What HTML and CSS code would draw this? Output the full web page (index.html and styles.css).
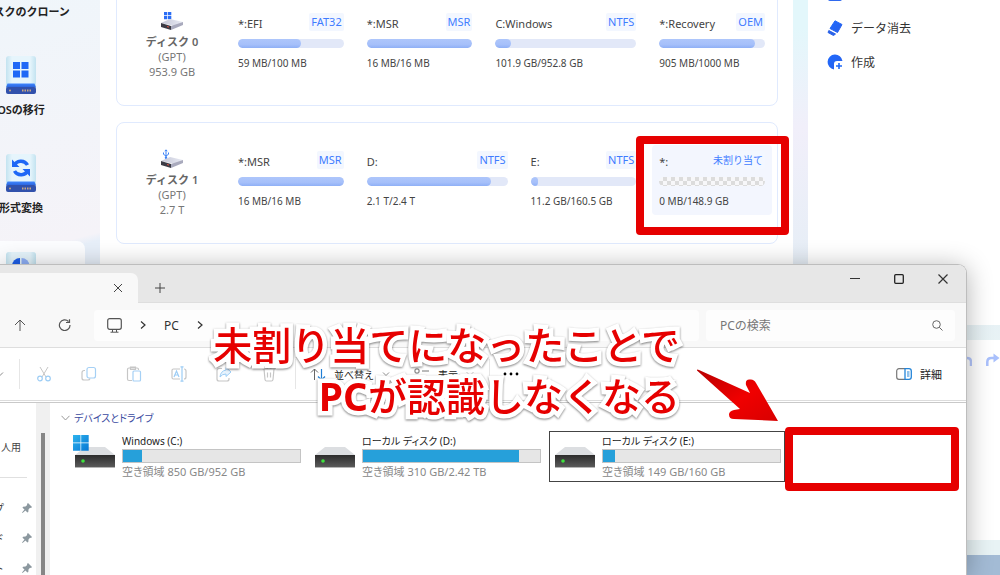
FILE: index.html
```html
<!DOCTYPE html>
<html lang="ja">
<head>
<meta charset="utf-8">
<meta name="viewport" content="width=device-width, initial-scale=1">
<title>ディスク管理</title>
<link rel="stylesheet" href="styles.css">
</head>
<body>
<svg class="defs" width="0" height="0" aria-hidden="true">
  <defs>
    <linearGradient id="g-box" x1="0" x2="1"><stop offset="0" stop-color="#c3e3f0"/><stop offset=".2" stop-color="#e6f5fc"/><stop offset=".8" stop-color="#e6f5fc"/><stop offset="1" stop-color="#c3e3f0"/></linearGradient>
    <linearGradient id="g-base" x1="0" y1="0" x2="0" y2="1"><stop offset="0" stop-color="#3f86ff"/><stop offset="1" stop-color="#2a62da"/></linearGradient>
    <linearGradient id="g-body" x1="0" y1="0" x2="0" y2="1"><stop offset="0" stop-color="#2c2c2c"/><stop offset="1" stop-color="#5a5a5a"/></linearGradient>
    <linearGradient id="g-win" x1="0" y1="0" x2="1" y2="1"><stop offset="0" stop-color="#2db4ee"/><stop offset="1" stop-color="#0877d4"/></linearGradient>
    <linearGradient id="g-blue" x1="0" y1="0" x2="1" y2="1"><stop offset="0" stop-color="#1f6bff"/><stop offset="1" stop-color="#2a5fe8"/></linearGradient>
    <linearGradient id="g-top" x1="0" y1="0" x2="1" y2="0"><stop offset="0" stop-color="#c5c7d6"/><stop offset="1" stop-color="#e8eaf4"/></linearGradient>
    <linearGradient id="g-arrow" x1="0" y1="0" x2="1" y2="1"><stop offset="0" stop-color="#b80000"/><stop offset=".55" stop-color="#f00000"/><stop offset="1" stop-color="#d80000"/></linearGradient>
    <symbol id="case" viewBox="0 0 30 38">
      <rect x="0" y="0" width="30" height="34" rx="3" fill="url(#g-box)"/>
      <path d="M1.500 27.500h27l1.500 4H0z" fill="url(#g-base)"/>
      <rect x="0" y="31" width="30" height="7" rx="2" fill="#3151ac"/>
      <circle cx="4" cy="34.500" r="1" fill="#c9a882"/>
      <path d="M16 34.500h10" stroke="#c9a882" stroke-width="2" stroke-dasharray="1.500 1"/>
    </symbol>
    <symbol id="ssd" viewBox="0 0 22 11">
      <path d="M0 4 9 0l13 3-8 4z" fill="url(#g-top)"/>
      <path d="M0 4l10 3v4L0 8z" fill="#3b3b45"/>
      <path d="M10 7l12-4v3l-12 5z" fill="#a9aabd"/>
      <path d="M6 7.500l2 .6" stroke="#e05040"/>
    </symbol>
    <symbol id="drive" viewBox="0 0 40 21">
      <path d="M0 8 10 0h20l10 8z" fill="#dcdee1"/>
      <rect x="0" y="8" width="40" height="12" fill="url(#g-body)"/>
      <path d="M0 20.500h40" stroke="#b5b5b5"/>
      <circle cx="8" cy="14" r="1.800" fill="#3ee23e"/>
    </symbol>
    <symbol id="pin" viewBox="0 0 10 10">
      <path d="M6 0 10 4 9 5 8 4.800 6.500 6.500 6.300 9 5.300 9.500 3.500 7.500 0.500 10 0 9.500 2.500 6.500.5 4.700 1 3.700 3.500 3.500 5.200 2 5 1z" fill="#8c989f"/>
    </symbol>
    <symbol id="chev-r" viewBox="0 0 6 8"><path d="M1 .5 5 4 1 7.500" fill="none" stroke="#333" stroke-width="1.200"/></symbol>
    <symbol id="chev-d" viewBox="0 0 8 6"><path d="M1 1.500 4 4.500 7 1.500" fill="none" stroke="#8a8a8a"/></symbol>
  </defs>
</svg>

<div class="desktop">
  <div class="app">
    <nav class="side">
      <button class="side-item"><svg class="side-icon" viewBox="0 0 30 38"><use href="#case"/></svg><span>ディスクのクローン</span></button>
      <button class="side-item"><svg class="side-icon" viewBox="0 0 30 38"><use href="#case"/><path d="M7 6h7v7H7zM15.500 6h7v7h-7zM7 14.500h7v7H7zM15.500 14.500h7v7h-7z" fill="#1f68f6"/></svg><span>OSの移行</span></button>
      <button class="side-item"><svg class="side-icon" viewBox="0 0 30 38"><use href="#case"/><path d="M8 12a7.500 7.500 0 0 1 13.500-1M22 16a7.500 7.500 0 0 1-13.500 1" fill="none" stroke="#1f68f6" stroke-width="3.500"/><path d="M6 5.500V13h7.500zM24 22.500V15h-7.500z" fill="#1f68f6"/></svg><span>形式変換</span></button>
      <button class="side-item active" aria-label="パーティション"><svg class="side-icon" viewBox="0 0 30 38"><use href="#case"/><path d="M14 6v16A8 8 0 0 1 14 6z" fill="#1f5fe8"/><path d="M15.500 6a8 8 0 0 1 0 16z" fill="#8fb0f8"/></svg></button>
    </nav>

    <main class="disks">
      <section class="card">
        <div class="disk">
          <svg class="disk-icon" viewBox="0 0 22 20"><path d="M3 1h3.300v3.300H3zM7 1h3.300v3.300H7zM3 5h3.300v3.300H3zM7 5h3.300v3.300H7z" fill="#2a6df5"/><use href="#ssd" x="0" y="8" width="22" height="11"/></svg>
          <b>ディスク 0</b><span>(GPT)</span><span>953.9 GB</span>
        </div>
        <div class="part">
          <div class="part-head"><span>*:EFI</span><em class="tag">FAT32</em></div>
          <div class="bar"><i style="width:60%"></i></div><p>59 MB/100 MB</p>
        </div>
        <div class="part">
          <div class="part-head"><span>*:MSR</span><em class="tag">MSR</em></div>
          <div class="bar"><i style="width:100%"></i></div><p>16 MB/16 MB</p>
        </div>
        <div class="part wide">
          <div class="part-head"><span>C:Windows</span><em class="tag">NTFS</em></div>
          <div class="bar"><i style="width:11%"></i></div><p>101.9 GB/952.8 GB</p>
        </div>
        <div class="part">
          <div class="part-head"><span>*:Recovery</span><em class="tag">OEM</em></div>
          <div class="bar"><i style="width:91%"></i></div><p>905 MB/1000 MB</p>
        </div>
      </section>

      <section class="card">
        <div class="disk">
          <svg class="disk-icon" viewBox="0 0 22 20"><path d="M5 9V1M3.800 2.200 5 .8l1.200 1.400M2.500 3.500v1.800L5 7l2.500-1.700V3.500" fill="none" stroke="#3b82f6"/><circle cx="5" cy="8.800" r="1.200" fill="#3b82f6"/><use href="#ssd" x="0" y="8" width="22" height="11"/></svg>
          <b>ディスク 1</b><span>(GPT)</span><span>2.7 T</span>
        </div>
        <div class="part">
          <div class="part-head"><span>*:MSR</span><em class="tag">MSR</em></div>
          <div class="bar"><i style="width:100%"></i></div><p>16 MB/16 MB</p>
        </div>
        <div class="part wide">
          <div class="part-head"><span>D:</span><em class="tag">NTFS</em></div>
          <div class="bar"><i style="width:88%"></i></div><p>2.1 T/2.4 T</p>
        </div>
        <div class="part">
          <div class="part-head"><span>E:</span><em class="tag">NTFS</em></div>
          <div class="bar"><i style="width:7%"></i></div><p>11.2 GB/160.5 GB</p>
        </div>
        <div class="part selected">
          <div class="part-head"><span>*:</span><em class="tag free">未割り当て</em></div>
          <div class="bar empty"></div><p>0 MB/148.9 GB</p>
        </div>
      </section>
    </main>

    <aside class="actions">
      <div class="menu">
        <button class="menu-item" aria-label="操作"><svg viewBox="0 0 16 16"><rect x="1" y="2" width="14" height="13" rx="2" fill="#2f69ee"/></svg></button>
        <button class="menu-item"><svg viewBox="0 0 16 16"><path d="M8 .8 15 4.500 10.500 12.500 3 8.500z" fill="url(#g-blue)" stroke="url(#g-blue)" stroke-linejoin="round"/><path d="M1.800 10.500 8.500 14 6.500 15.500 1 12.500z" fill="#2a62e8" stroke="#2a62e8" stroke-linejoin="round"/></svg>データ消去</button>
        <button class="menu-item"><svg viewBox="0 0 16 16"><path d="M15.500 7A7.500 7.500 0 1 0 7 15.500V10a3 3 0 0 1 3-3z" fill="url(#g-blue)"/><path d="M12 9v6M9 12h6" stroke="#1f68f6" stroke-width="1.600"/></svg>作成</button>
      </div>
      <div class="queue">
        <button aria-label="元に戻す"><svg viewBox="0 0 14 14"><path d="M13 13V9q0-4-4-4H2M5 1 1 5l4 4" fill="none" stroke="#b4c6fb" stroke-width="2.500"/></svg></button>
        <button aria-label="やり直し"><svg viewBox="0 0 14 14"><path d="M1.300 13V9q0-4 4-4H8" fill="none" stroke="#a9c0fc" stroke-width="2.500"/><path d="M7.500 0.500 13.500 5 7.500 9.500z" fill="#a9c0fc"/></svg></button>
      </div>
    </aside>
  </div>

  <div class="window">
    <header class="titlebar">
      <div class="tab"><button aria-label="タブを閉じる"><svg width="10" height="10" viewBox="0 0 10 10"><path d="M1 1l8 8M9 1 1 9" stroke="#444"/></svg></button></div>
      <button class="new-tab" aria-label="新しいタブ"><svg width="10" height="10" viewBox="0 0 10 10"><path d="M5 0v10M0 5h10" stroke="#444"/></svg></button>
      <div class="win-btns">
        <button aria-label="最小化"><svg width="10" height="10" viewBox="0 0 10 10"><path d="M0 4.500h10" stroke="#333"/></svg></button>
        <button aria-label="最大化"><svg width="10" height="10" viewBox="0 0 10 10"><rect x=".7" y=".7" width="8.600" height="8.600" rx="1" fill="none" stroke="#222" stroke-width="1.300"/></svg></button>
        <button aria-label="閉じる"><svg width="10" height="10" viewBox="0 0 10 10"><path d="M.5.5l9 9M9.500.5l-9 9" stroke="#333" stroke-width="1.200"/></svg></button>
      </div>
    </header>

    <div class="nav-row">
      <button class="nav-btn" aria-label="上へ"><svg width="12" height="12" viewBox="0 0 12 12"><path d="M6 12V1M1 6l5-5 5 5" fill="none" stroke="#555"/></svg></button>
      <button class="nav-btn" aria-label="更新"><svg width="13" height="12" viewBox="0 0 13 12"><path d="M10.500 2.500A5.300 5.300 0 1 0 12 6M11.500.3v3.200H8" fill="none" stroke="#555" stroke-width="1.200"/></svg></button>
      <div class="address">
        <svg width="15" height="15" viewBox="0 0 15 15"><rect x=".7" y=".7" width="13.600" height="10.600" rx="2" fill="none" stroke="#555" stroke-width="1.200"/><path d="M5.500 11.500v2.500M9.500 11.500v2.500M3.500 14.200h8" stroke="#555"/></svg>
        <svg width="6" height="8"><use href="#chev-r"/></svg>
        <span>PC</span>
        <svg width="6" height="8"><use href="#chev-r"/></svg>
      </div>
      <label class="search"><input type="text" placeholder="PCの検索" aria-label="PCの検索"><svg width="11" height="11" viewBox="0 0 11 11"><circle cx="4.500" cy="4.500" r="3.800" fill="none" stroke="#666"/><path d="M7.300 7.300 10.500 10.500" stroke="#666"/></svg></label>
    </div>

    <div class="toolbar">
      <button class="edge" aria-label="新規作成"><svg width="8" height="6"><use href="#chev-d"/></svg></button>
      <span class="sep"></span>
      <button class="tool" aria-label="切り取り"><svg viewBox="0 0 16 16" fill="none"><path d="M4 1l6 10M12 1 6 11" stroke="#c6c6c6"/><circle cx="4" cy="12.500" r="2.300" stroke="#9dcdf5" stroke-width="1.200"/><circle cx="12" cy="12.500" r="2.300" stroke="#9dcdf5" stroke-width="1.200"/></svg></button>
      <button class="tool" aria-label="コピー"><svg viewBox="0 0 16 16" fill="none"><path d="M4 4.500H3a2 2 0 0 0-2 2V12a2 2 0 0 0 2 2h4a2 2 0 0 0 2-1.500" stroke="#c6c6c6" stroke-width="1.200"/><rect x="6" y="1.500" width="8.500" height="10.500" rx="2" stroke="#a5d0f5" stroke-width="1.200"/></svg></button>
      <button class="tool" aria-label="貼り付け"><svg viewBox="0 0 16 16" fill="none"><path d="M6 14.500H3a1.500 1.500 0 0 1-1.500-1.500V3.500A1.500 1.500 0 0 1 3 2h8a1.500 1.500 0 0 1 1.500 1.500V4M4.500 3.500v-2.500h5v2.500z" stroke="#c6c6c6" stroke-width="1.200"/><rect x="7" y="5" width="7.500" height="10" rx="1" stroke="#a5d0f5" stroke-width="1.200"/></svg></button>
      <button class="tool" aria-label="名前の変更"><svg viewBox="0 0 16 16" fill="none"><path d="M9 3H2.500A1.500 1.500 0 0 0 1 4.500v7A1.500 1.500 0 0 0 2.500 13H9M13 3a2 2 0 0 1 2 2v6a2 2 0 0 1-2 2" stroke="#c6c6c6" stroke-width="1.200"/><path d="M11 1v14M9.500.8h3M9.500 15.200h3M3 11l2.500-6L8 11M4 9h3" stroke="#9dcdf5" stroke-width="1.200"/></svg></button>
      <button class="tool" aria-label="共有"><svg viewBox="0 0 16 16" fill="none"><path d="M6 2.500H3a2 2 0 0 0-2 2V13a2 2 0 0 0 2 2h8a2 2 0 0 0 2-2v-1" stroke="#c6c6c6" stroke-width="1.200"/><path d="M10 1.500 15 6l-5 4.500V8Q6 8 4 11q.5-6 6-7z" fill="#e7f3fd" stroke="#9dcdf5"/></svg></button>
      <button class="tool" aria-label="削除"><svg viewBox="0 0 16 16" fill="none"><path d="M1.500 3h13M6 3q0-2 2-2t2 2M3 3l1 10.500q.2 1.500 1.500 1.500h5q1.300 0 1.500-1.500L13 3M6.500 6.500v5M9.500 6.500v5" stroke="#c6c6c6" stroke-width="1.200"/></svg></button>
      <span class="sep after-tools"></span>
      <button class="menu-btn sort"><svg width="16" height="13" viewBox="0 0 16 13" fill="none"><path d="M4.500 12V1M1 4.500 4.500 1 8 4.500" stroke="#666"/><path d="M11.500 1v11M8 8.500l3.500 3.500L15 8.500" stroke="#1f7fd6" stroke-width="1.200"/></svg>並べ替え<svg width="8" height="6"><use href="#chev-d"/></svg></button>
      <button class="menu-btn"><svg width="16" height="13" viewBox="0 0 16 13" fill="none"><rect x="1" y="1" width="4" height="4" rx="1" stroke="#666"/><rect x="1" y="8" width="4" height="4" rx="1" stroke="#666"/><path d="M8 3h7M8 10h7" stroke="#777"/></svg>表示<svg width="8" height="6"><use href="#chev-d"/></svg></button>
      <span class="sep"></span>
      <button class="more" aria-label="その他"><svg width="16" height="4" viewBox="0 0 16 4"><circle cx="2" cy="2" r="1.400"/><circle cx="8" cy="2" r="1.400"/><circle cx="14" cy="2" r="1.400"/></svg></button>
      <button class="menu-btn details"><svg width="16" height="12" viewBox="0 0 16 12" fill="none"><path d="M9 .7H3a2.300 2.300 0 0 0-2.300 2.300v6A2.300 2.300 0 0 0 3 11.300h6" stroke="#777" stroke-width="1.200"/><path d="M9 .7h4a2.300 2.300 0 0 1 2.300 2.300v6a2.300 2.300 0 0 1-2.300 2.300H9z" stroke="#2384d8" stroke-width="1.300"/><path d="M11 4h2.500M11 6h2.500M11 8h2.500" stroke="#2384d8"/></svg>詳細</button>
    </div>

    <div class="body">
      <div class="tree">
        <div class="tree-top">人用</div>
        <div class="tree-item"><span>プ</span><svg width="10" height="10"><use href="#pin"/></svg></div>
        <div class="tree-item"><span>ド</span><svg width="10" height="10"><use href="#pin"/></svg></div>
        <div class="tree-item"><span>ト</span><svg width="10" height="10"><use href="#pin"/></svg></div>
      </div>
      <div class="track"><div class="thumb"></div></div>
      <div class="content">
        <button class="group"><svg width="9" height="6" viewBox="0 0 9 6"><path d="M.5.8 4.500 5 8.500.8" fill="none" stroke="#999"/></svg>デバイスとドライブ</button>
        <div class="drives">
          <div class="drive">
            <svg class="drive-icon" viewBox="0 0 42 34"><use href="#drive" x="2" y="13" width="40" height="21"/><path d="M0 1h7.500v7.500H0zM8.200 1h7.500v7.500H8.200zM0 9.200h7.500v7.500H0zM8.200 9.200h7.500v7.500H8.200z" fill="url(#g-win)"/></svg>
            <div class="drive-info"><span>Windows (C:)</span><div class="meter"><i style="width:11%"></i></div><small>空き領域 850 GB/952 GB</small></div>
          </div>
          <div class="drive">
            <svg class="drive-icon" viewBox="0 0 42 34"><use href="#drive" x="2" y="13" width="40" height="21"/></svg>
            <div class="drive-info"><span>ローカル ディスク (D:)</span><div class="meter"><i style="width:88%"></i></div><small>空き領域 310 GB/2.42 TB</small></div>
          </div>
          <div class="drive focus">
            <svg class="drive-icon" viewBox="0 0 42 34"><use href="#drive" x="2" y="13" width="40" height="21"/></svg>
            <div class="drive-info"><span>ローカル ディスク (E:)</span><div class="meter"><i style="width:7%"></i></div><small>空き領域 149 GB/160 GB</small></div>
          </div>
        </div>
      </div>
    </div>
  </div>

  <div class="mark mark-part"></div>
  <div class="mark mark-drive"></div>
  <p class="note">未割り当てになったことで<br><b>PC</b>が認識しなくなる</p>
  <svg class="arrow" viewBox="0 0 84 54"><path d="M1 1.500Q.5 0 3 1L54 24 50 16Q49 10 54 10.500 58 10 60 14L82 52 38 50Q33 50 33 45.500 33 42 38 41L44 40z" fill="url(#g-arrow)"/></svg>
</div>
</body>
</html>
```

FILE: styles.css
```css
* { box-sizing: border-box; }

body {
  margin: 0;
  font-family: "Noto Sans", "Noto Sans CJK JP", sans-serif;
  font-size: 11px;
  color: #444;
}

button {
  display: flex;
  align-items: center;
  padding: 0;
  border: 0;
  background: none;
  font: inherit;
  color: inherit;
}

p { margin: 0; }
svg { flex: none; display: block; }
.defs { position: absolute; }

.desktop {
  position: relative;
  height: 100vh;
  overflow: hidden;
  background: #a3bbd5;
}

/* Partition manager, scrolled partly out of view */
.app {
  display: flex;
  height: calc(100vh + 33px);
  margin: -53px 0 0 -43px;
  background: linear-gradient(#e3f7fb 0, #e3f7fb 80px, #f1effa 180px, #e6eef6 320px, #e8f3f5 400px);
}

.side {
  width: 143px;
  padding-right: 15px;
  background: linear-gradient(165deg, #eef6fb, #f5f3f8 50%, #e7eff9 320px);
}

.side-item {
  flex-direction: column;
  width: 100%;
  height: 98px;
  padding-top: 11px;
  gap: 8px;
  border-radius: 8px;
  color: #222;
  font-weight: 600;
  line-height: 16px;
  white-space: nowrap;
}

.side-item.active { background: #fcfdff; }
.side-icon { width: 30px; height: 38px; }

.disks {
  flex: 1;
  display: flex;
  flex-direction: column;
  gap: 16px;
  padding: 37px 15px 0 16px;
  background: #fff;
}

.card {
  display: flex;
  gap: 9px;
  height: 122px;
  padding: 22px 5px 0 0;
  border: 1px solid #e0eafe;
  border-radius: 8px;
}

.disk {
  display: flex;
  flex-direction: column;
  align-items: center;
  width: 110px;
  margin-right: -5px;
  padding-top: 4px;
  color: #777;
  line-height: 15px;
}

.disk b { color: #666; font-weight: 600; }
.disk-icon { width: 22px; height: 20px; margin-bottom: 3px; }

.part {
  flex: 3 1 0;
  height: 70px;
  padding: 6px 7px 0;
  border-radius: 4px;
}

.part.wide { flex-grow: 4; }
.part.selected { background: #f3f6fe; }

.part-head {
  display: flex;
  justify-content: space-between;
  height: 26px;
  white-space: nowrap;
}

.part-head span { line-height: 22px; }

.tag {
  height: 18px;
  padding: 0 2px;
  border-radius: 2px;
  background: #f3f7ff;
  color: #3f7cff;
  font-size: 11px;
  font-style: normal;
  line-height: 18px;
}

.tag.free { font-size: 10px; }

.bar {
  height: 9px;
  overflow: hidden;
  border-radius: 5px;
  background: #e2e8f8;
}

.bar i {
  display: block;
  height: 100%;
  border-radius: 5px;
  background: linear-gradient(#aec6fb, #a6c0fa 60%, #8fb0f6);
}

.bar.empty { background: repeating-conic-gradient(#dcdcdc 0 25%, #f7f7f9 0 50%) 0 0 / 8px 8px; }

.part p { margin-top: 7px; font-size: 10px; line-height: 16px; white-space: nowrap; }

.actions {
  display: flex;
  flex-direction: column;
  gap: 15px;
  width: 207px;
  padding: 0 0 15px 15px;
}

.menu {
  height: 378px;
  padding: 30px 19px 0;
  background: #fff;
}

.menu-item { gap: 8px; height: 34px; font-size: 12px; color: #333; }
.menu-item svg { width: 16px; height: 16px; }

.queue {
  flex: 1;
  display: flex;
  justify-content: flex-end;
  align-items: flex-start;
  gap: 14px;
  padding-top: 13px;
  background: #fff;
}

.queue svg { width: 14px; height: 14px; }

/* File explorer window */
.window {
  position: absolute;
  inset: 264px 33px 0 0;
  display: flex;
  flex-direction: column;
  border: solid #bdbdbd;
  border-width: 1px 1px 0 0;
  border-radius: 0 9px 0 0;
  background: #fff;
  box-shadow: 0 3px 26px rgba(0, 0, 0, .3);
  overflow: hidden;
}

.titlebar {
  display: flex;
  height: 38px;
  border-bottom: 1px solid #dedede;
  background: #e7e7e7;
}

.tab {
  display: flex;
  justify-content: flex-end;
  align-items: center;
  width: 138px;
  height: 30px;
  margin-top: 8px;
  padding-right: 15px;
  border-radius: 0 7px 0 0;
  background: #f8f8f8;
}

.new-tab { margin: 9px 0 0 17px; }

.win-btns {
  display: flex;
  align-items: flex-start;
  gap: 34px;
  margin-left: auto;
  padding: 9px 18px 0 0;
}

.nav-row {
  display: flex;
  align-items: center;
  height: 45px;
  padding: 0 11px 0 0;
  border-bottom: 1px solid #dedede;
  background: #f8f8f8;
}

.nav-btn { justify-content: center; width: 45px; }
.nav-btn:first-child { margin-left: -3px; }

.address, .search {
  display: flex;
  align-items: center;
  height: 31px;
  border-radius: 4px;
  background: #fdfdfd;
}

.address {
  flex: 1;
  gap: 18px;
  margin: 0 7px 0 7px;
  padding-left: 13px;
  color: #333;
  font-size: 12px;
}

.search { width: 249px; padding: 0 12px 0 14px; }

.search input {
  flex: 1;
  min-width: 0;
  padding: 0;
  border: 0;
  background: none;
  font: 12px "Noto Sans", "Noto Sans CJK JP", sans-serif;
}

.search input::placeholder { color: #777; opacity: 1; }

.toolbar {
  display: flex;
  align-items: center;
  height: 53px;
  border-bottom: 1px solid #dcdcdc;
  font-size: 10px;
  color: #222;
}

.edge { width: 19px; margin-left: -4px; margin-right: 4px; }
.sep { width: 1px; height: 30px; background: #e6e6e6; }
.sep.after-tools { margin-left: 4px; }
.tool { justify-content: center; width: 45px; }
.tool svg { width: 16px; height: 16px; }
.tool:nth-child(3) { margin-left: 1px; }
.menu-btn { gap: 8px; margin-right: 15px; }
.menu-btn.sort { margin: 0 24px 0 14px; }
.more { margin-left: 13px; }
.menu-btn.details { margin: 0 24px 0 auto; font-size: 11px; }

.body {
  flex: 1;
  display: flex;
  min-height: 0;
  margin-top: 1px;
  border-top: 1px solid #c9c9c9;
}

.tree { width: 36px; overflow: hidden; }

.tree-top {
  width: 27px;
  height: 75px;
  padding: 36px 0 0 1px;
  border-bottom: 1px solid #e0e0e0;
  font-size: 10px;
  line-height: 16px;
  white-space: nowrap;
}

.tree-top + .tree-item { margin-top: 15px; }

.tree-item {
  display: flex;
  justify-content: space-between;
  align-items: center;
  height: 30px;
  margin-left: -7px;
  padding-right: 4px;
}

.track { width: 14px; padding: 30px 5px 0; background: #f0f0f0; }
.thumb { height: 100%; background: #868686; }

.content { flex: 1; padding: 7px 0 0 11px; }
.group { gap: 4px; color: #3a4a9f; font-size: 10px; line-height: 16px; font-feature-settings: "palt"; }

.drives {
  display: grid;
  grid-template-columns: repeat(auto-fill, 236px);
  gap: 4px;
  margin: 5px 0 0 8px;
}

.drive {
  display: flex;
  gap: 7px;
  padding: 2px 3px;
  border: 1px solid transparent;
}

.drive.focus { border-color: #444; }
.drive-icon { width: 42px; height: 34px; }
.drive-info { flex: 1; line-height: 15px; white-space: nowrap; }
.drive-info span { display: block; color: #222; font-size: 10px; font-feature-settings: "palt"; }
.drive-info small { display: block; margin-top: 1px; color: #888; font-size: 11px; font-feature-settings: "palt"; }
.meter { height: 14px; border: 1px solid #c4c4c4; background: #e6e6e6; }
.meter i { display: block; height: 100%; background: #26a0da; }

/* Annotations over the two windows */
.mark {
  position: absolute;
  border: 8px solid #e60000;
  border-radius: 4px;
}

.mark-part { left: 636px; top: 136px; width: 153px; height: 99px; }
.mark-drive { left: 785px; top: 427px; width: 174px; height: 64px; }

.note {
  position: absolute;
  top: 319px;
  right: 320px;
  color: #e60000;
  font-size: 39px;
  font-weight: 500;
  line-height: 51px;
  text-align: right;
  white-space: nowrap;
  -webkit-text-stroke: 9px #fff;
  paint-order: stroke fill;
  stroke-linejoin: round;
  filter: drop-shadow(0 1px 1px rgba(0, 0, 0, .5));
}

.note b { font-weight: 700; }

.arrow { position: absolute; left: 696px; top: 369px; width: 84px; height: 54px; }
```
